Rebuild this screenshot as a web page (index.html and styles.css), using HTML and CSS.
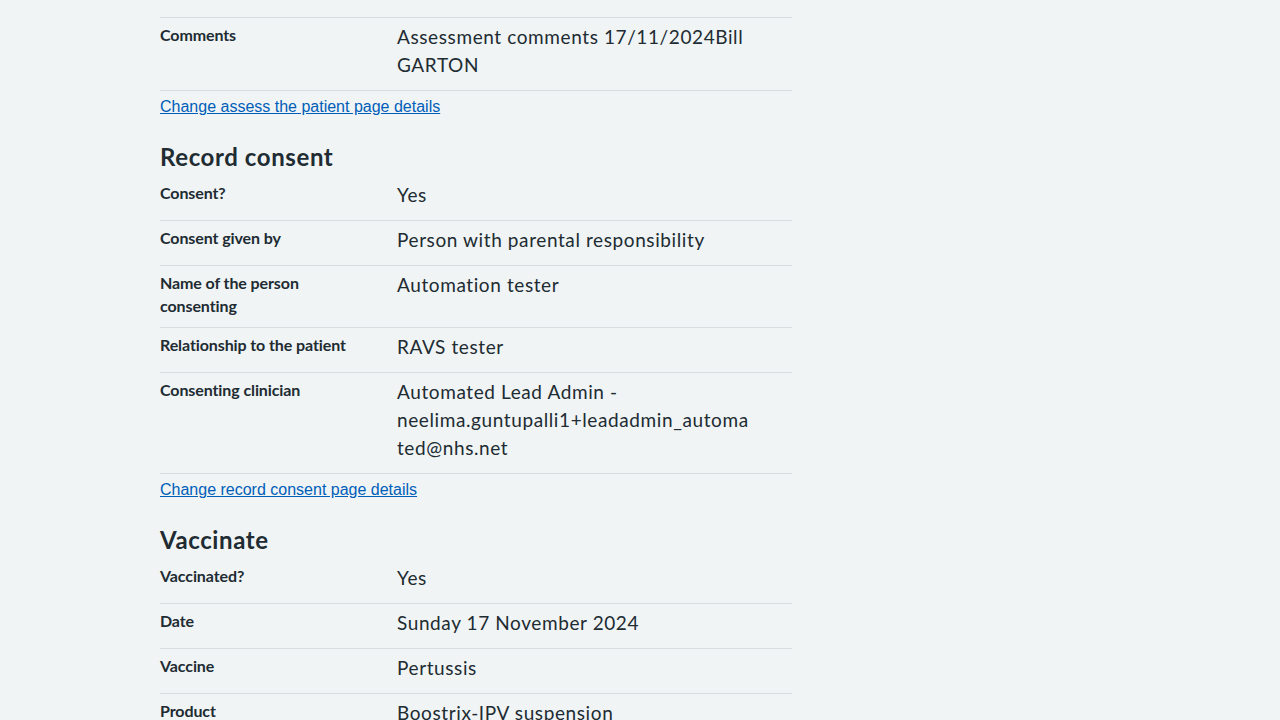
FILE: index.html
```html
<!DOCTYPE html>
<html lang="en">
<head>
<meta charset="utf-8">
<title>Check and confirm</title>
<link rel="stylesheet" href="styles.css">
</head>
<body>
<main class="page">
  <dl class="summary summary--first">
    <div class="row">
      <dt class="key">Comments</dt>
      <dd class="value">Assessment comments 17/11/2024Bill GARTON</dd>
    </div>
  </dl>
  <p class="change"><a class="link" href="#">Change assess the patient page details</a></p>

  <h2 class="heading">Record consent</h2>
  <dl class="summary">
    <div class="row">
      <dt class="key">Consent?</dt>
      <dd class="value">Yes</dd>
    </div>
    <div class="row">
      <dt class="key">Consent given by</dt>
      <dd class="value">Person with parental responsibility</dd>
    </div>
    <div class="row">
      <dt class="key">Name of the person consenting</dt>
      <dd class="value">Automation tester</dd>
    </div>
    <div class="row">
      <dt class="key">Relationship to the patient</dt>
      <dd class="value">RAVS tester</dd>
    </div>
    <div class="row">
      <dt class="key">Consenting clinician</dt>
      <dd class="value">Automated Lead Admin - neelima.guntupalli1+leadadmin_automated@nhs.net</dd>
    </div>
  </dl>
  <p class="change"><a class="link" href="#">Change record consent page details</a></p>

  <h2 class="heading">Vaccinate</h2>
  <dl class="summary">
    <div class="row">
      <dt class="key">Vaccinated?</dt>
      <dd class="value">Yes</dd>
    </div>
    <div class="row">
      <dt class="key">Date</dt>
      <dd class="value">Sunday 17 November 2024</dd>
    </div>
    <div class="row">
      <dt class="key">Vaccine</dt>
      <dd class="value">Pertussis</dd>
    </div>
    <div class="row">
      <dt class="key">Product</dt>
      <dd class="value">Boostrix-IPV suspension</dd>
    </div>
    <div class="row">
      <dt class="key">Batch</dt>
      <dd class="value">AB1234</dd>
    </div>
  </dl>
</main>
</body>
</html>
```

FILE: styles.css
```css
html, body {
  margin: 0;
  padding: 0;
}

body {
  background: #f0f4f5;
  color: #212b32;
  font-family: Lato, "Open Sans", sans-serif;
}

.page {
  width: 632px;
  margin-left: 160px;
  padding-top: 17px;
}

.summary {
  margin: 0;
  padding: 0;
}

.summary--first {
  border-top: 1px solid #d8dde0;
}

.row {
  display: grid;
  grid-template-columns: 237px minmax(0, 1fr);
  border-bottom: 1px solid #d8dde0;
}

.key {
  margin: 0;
  padding: 6px 24px 10px 0;
  font-size: 16px;
  font-weight: 700;
  line-height: 22.5px;
  letter-spacing: -0.1px;
}

.value {
  margin: 0;
  padding: 5px 41px 11px 0;
  font-size: 19px;
  line-height: 28px;
  letter-spacing: 0.6px;
  overflow-wrap: break-word;
}

.change {
  margin: 4px 0 0;
  font-family: "Liberation Sans", Arial, sans-serif;
  font-size: 16px;
  line-height: 24px;
}

.link {
  color: #005eb8;
  text-decoration: underline;
}

.heading {
  margin: 22px 0 3px;
  font-size: 24px;
  font-weight: 700;
  line-height: 32px;
  letter-spacing: 0.6px;
}
```
